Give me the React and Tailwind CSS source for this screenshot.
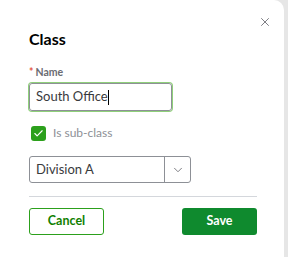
import { X, Check, ChevronDown } from 'lucide-react'

export default function App() {
  return (
    <div className="w-[288px] h-[257px] bg-[#e6e6e6] flex font-['Lato',sans-serif]">
      <div className="relative w-[284px] h-full bg-white rounded-tr-[10px] pl-[29px] pr-[27px]">
        <button className="absolute right-[12px] top-[15px] text-[#6b6c72]">
          <X size={14} strokeWidth={1.5} />
        </button>

        <h1 className="pt-[29px] text-[16px] leading-[20px] font-bold text-[#000]">Class</h1>

        <div className="mt-[16px] flex items-center text-[10.5px] font-bold leading-[14px] text-[#6b6c72]">
          <span className="text-[#e35141] mr-[2px]">*</span>
          Name
        </div>

        <div className="mt-[4px] w-[143px] h-[28px] rounded-[3px] border border-[#8d9096] ring-1 ring-[#8fd07a] flex items-center pl-[6px]">
          <span className="text-[13px] text-[#393a3d]">South Office</span>
          <span className="w-px h-[15px] bg-black" />
        </div>

        <label className="mt-[14px] flex items-center gap-[7px] h-[16px]">
          <span className="ml-[2px] w-[15px] h-[15px] rounded-[3px] bg-[#2ca01c] flex items-center justify-center">
            <Check size={11} strokeWidth={2.5} className="text-white" />
          </span>
          <span className="text-[12px] text-[#8d9096]">Is sub-class</span>
        </label>

        <div className="mt-[15px] w-[162px] h-[27px] rounded-[3px] border border-[#8d9096] flex">
          <div className="flex-1 flex items-center pl-[6px] text-[13px] text-[#393a3d]">Division A</div>
          <div className="w-[26px] border-l border-[#8d9096] flex items-center justify-center text-[#6b6c72]">
            <ChevronDown size={14} strokeWidth={1.5} />
          </div>
        </div>

        <div className="mt-[13px] h-px bg-[#d4d7dc]" />

        <div className="mt-[11px] flex justify-between">
          <button className="w-[75px] h-[27px] rounded-[3px] border border-[#2ca01c] text-[#108000] text-[12.5px] font-bold">
            Cancel
          </button>
          <button className="w-[75px] h-[27px] rounded-[3px] bg-[#0f8a2e] text-white text-[12.5px] font-bold">
            Save
          </button>
        </div>
      </div>
    </div>
  )
}
